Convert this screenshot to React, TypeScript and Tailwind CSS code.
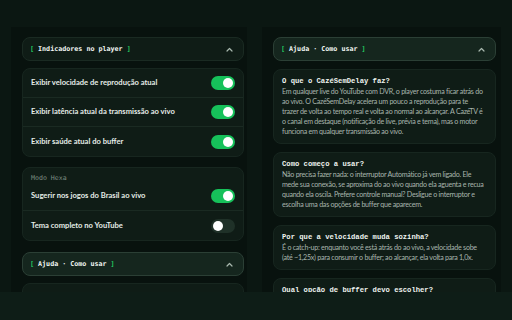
import React from "react";

const mono = { fontFamily: '"DejaVu Sans Mono", "Liberation Mono", monospace' };
const monoBold = { fontFamily: '"Liberation Mono", "DejaVu Sans Mono", monospace' };
const sans = { fontFamily: 'Lato, "Noto Sans", sans-serif' };

function Toggle({ on }: { on: boolean }) {
  return (
    <div
      className={`flex h-[14px] w-[24px] shrink-0 items-center rounded-full px-[2px] ${
        on ? "justify-end bg-[#16c15a]" : "justify-start bg-[#1f3128]"
      }`}
    >
      <div className="h-[10px] w-[10px] rounded-full bg-white" />
    </div>
  );
}

function Chevron() {
  return (
    <svg width="7" height="5" viewBox="0 0 7 5" fill="none">
      <path d="M1 4 L3.5 1.5 L6 4" stroke="#a8b8ae" strokeWidth="1.2" strokeLinecap="round" strokeLinejoin="round" />
    </svg>
  );
}

function SectionHeader({ title, lit }: { title: string; lit?: boolean }) {
  return (
    <div
      className={`flex h-[24px] shrink-0 items-center justify-between rounded-[8px] border pl-[7px] pr-[10px] ${
        lit ? "border-[#2b3f35] bg-[#15261e]" : "border-[#1a2a22] bg-[#0f1c16]"
      }`}
    >
      <div className="text-[6.7px] font-bold text-[#f2f6f3]" style={mono}>
        <span className="text-[#22c55e]">[</span> {title} <span className="text-[#22c55e]">]</span>
      </div>
      <Chevron />
    </div>
  );
}

function Row({ label, on, last }: { label: string; on: boolean; last?: boolean }) {
  return (
    <div className={`flex h-[29px] items-center justify-between px-[8px] ${last ? "" : "border-b border-[#1a2a22]"}`}>
      <span className="text-[7.6px] font-bold text-[#e6ede8]" style={sans}>
        {label}
      </span>
      <Toggle on={on} />
    </div>
  );
}

const faq = [
  {
    q: "O que o CazéSemDelay faz?",
    a: [
      "Em qualquer live do YouTube com DVR, o player costuma ficar atrás do",
      "ao vivo. O CazéSemDelay acelera um pouco a reprodução para te",
      "trazer de volta ao tempo real e volta ao normal ao alcançar. A CazéTV é",
      "o canal em destaque (notificação de live, prévia e tema), mas o motor",
      "funciona em qualquer transmissão ao vivo.",
    ],
  },
  {
    q: "Como começo a usar?",
    a: [
      "Não precisa fazer nada: o interruptor Automático já vem ligado. Ele",
      "mede sua conexão, se aproxima do ao vivo quando ela aguenta e recua",
      "quando ela oscila. Prefere controle manual? Desligue o interruptor e",
      "escolha uma das opções de buffer que aparecem.",
    ],
  },
  {
    q: "Por que a velocidade muda sozinha?",
    a: [
      "É o catch-up: enquanto você está atrás do ao vivo, a velocidade sobe",
      "(até ~1,25x) para consumir o buffer; ao alcançar, ela volta para 1,0x.",
    ],
  },
  {
    q: "Qual opção de buffer devo escolher?",
    a: [
      "Quanto menor o buffer, mais perto do ao vivo você fica, mas maior a",
      "chance de travar em conexões instáveis.",
    ],
  },
];

function FaqCard({ q, a }: { q: string; a: string[] }) {
  return (
    <div className="shrink-0 rounded-[8px] border border-[#17261f] bg-[#0f1c16] px-[8px] pb-[6px] pt-[5px]">
      <div className="text-[7.2px] font-bold leading-[12px] text-[#eef3ef]" style={monoBold}>
        {q}
      </div>
      <div className="text-[7.1px] leading-[10px] tracking-[-0.26px] text-[#a8b5ad]" style={sans}>
        {a.map((line) => (
          <div key={line} className="whitespace-nowrap">
            {line}
          </div>
        ))}
      </div>
    </div>
  );
}

export default function App() {
  return (
    <div className="flex h-[320px] w-[512px] flex-col overflow-hidden bg-[#0b1712]">
      <div className="h-[27px] shrink-0" />
      <div className="flex h-[265px] shrink-0 gap-[15px] px-[11px]">
        {/* Left pane */}
        <div className="flex w-[236px] flex-col gap-[7px] overflow-hidden bg-[#08120e] pl-[11px] pr-[3px] pt-[10px]">
          <SectionHeader title="Indicadores no player" />
          <div className="shrink-0 rounded-[8px] border border-[#17261f] bg-[#0f1c16]">
            <Row label="Exibir velocidade de reprodução atual" on />
            <Row label="Exibir latência atual da transmissão ao vivo" on />
            <Row label="Exibir saúde atual do buffer" on last />
          </div>
          <div className="mt-[3px] shrink-0 rounded-[8px] border border-[#17261f] bg-[#0f1c16]">
            <div className="px-[8px] pt-[6px] text-[6.6px] leading-[8px] text-[#7d8c83]" style={mono}>
              Modo Hexa
            </div>
            <Row label="Sugerir nos jogos do Brasil ao vivo" on />
            <Row label="Tema completo no YouTube" on={false} last />
          </div>
          <div className="mt-[4px] shrink-0">
            <SectionHeader title="Ajuda · Como usar" lit />
          </div>
          <FaqCard q={faq[0].q} a={faq[0].a} />
        </div>
        {/* Right pane */}
        <div className="flex w-[239px] flex-col gap-[8px] overflow-hidden bg-[#08120e] pl-[11px] pr-[5px] pt-[10px]">
          <SectionHeader title="Ajuda · Como usar" lit />
          {faq.map((f) => (
            <FaqCard key={f.q} q={f.q} a={f.a} />
          ))}
        </div>
      </div>
      <div className="flex-1 bg-[#0e1d17]" />
    </div>
  );
}
